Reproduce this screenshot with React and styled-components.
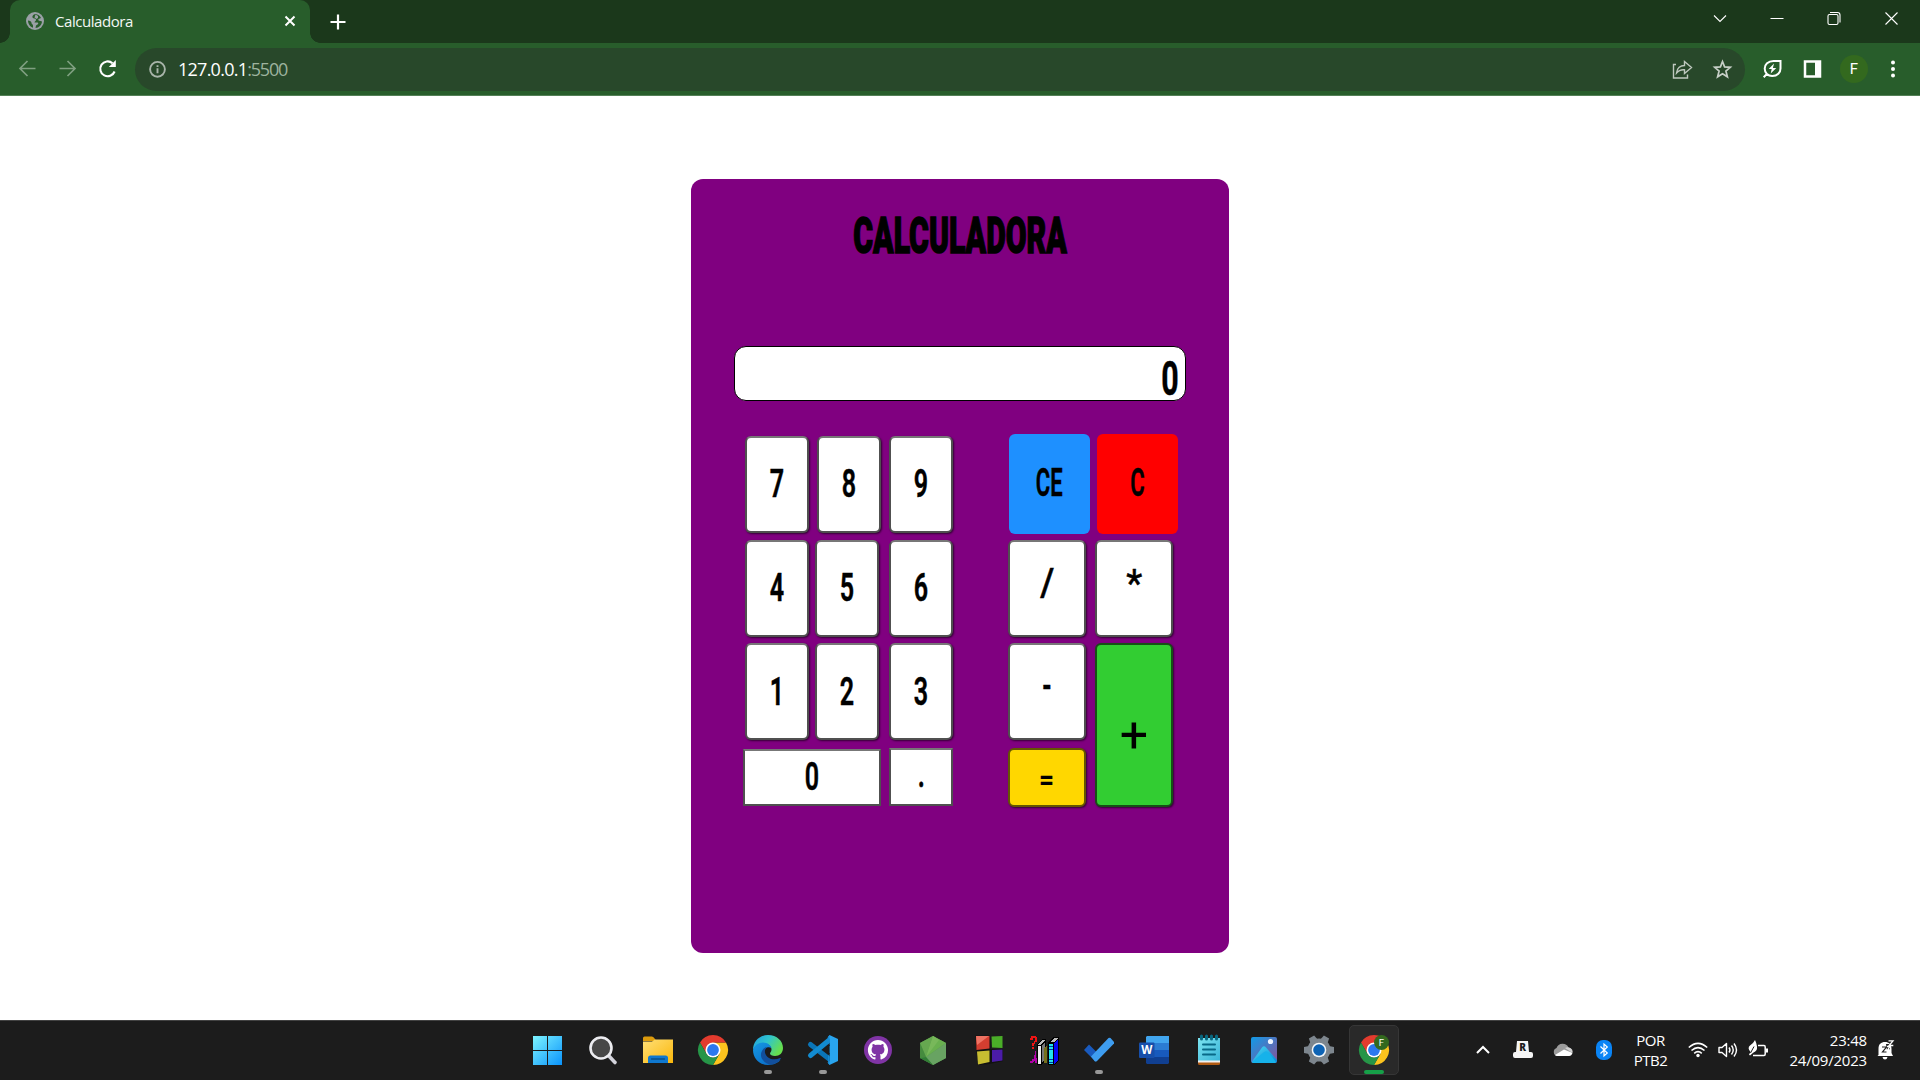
import React from "react";
import styled, { createGlobalStyle } from "styled-components";

const GlobalStyle = createGlobalStyle`
  * { box-sizing: border-box; }
  html, body { margin: 0; padding: 0; background: #fff; overflow: hidden; }
  svg { display: block; flex: none; overflow: visible; }
`;

const Screen = styled.div`
  width: 1920px;
  height: 1080px;
  display: flex;
  flex-direction: column;
  font-family: "Open Sans", "Noto Sans", sans-serif;
`;

/* ---------- browser window ---------- */
const TabStrip = styled.header`
  height: 43px;
  background: #1b381b;
  display: flex;
  align-items: flex-end;
  padding-left: 10px;
`;
const Tab = styled.div`
  position: relative;
  width: 300px;
  height: 43px;
  background: #285d2b;
  border-radius: 10px 10px 0 0;
  display: flex;
  align-items: center;
  padding: 0 14px 1px 16px;
  &::before, &::after {
    content: "";
    position: absolute;
    bottom: 0;
    width: 10px;
    height: 10px;
  }
  &::before { left: -10px; background: radial-gradient(circle at 0 0, transparent 9.5px, #285d2b 10px); }
  &::after { right: -10px; background: radial-gradient(circle at 100% 0, transparent 9.5px, #285d2b 10px); }
`;
const TabTitle = styled.span`
  flex: 1;
  margin-left: 11px;
  color: #f4f7f4;
  font-size: 15px;
  letter-spacing: -0.45px;
`;
const NewTab = styled.div`
  height: 43px;
  padding: 0 0 0 20px;
  display: flex;
  align-items: center;
  flex: 1;
`;
const WindowControls = styled.div`
  height: 43px;
  display: flex;
  padding: 12px 22px 0 0;
  gap: 44px;
`;
const Toolbar = styled.div`
  height: 53px;
  background: #285d2b;
  border-bottom: 1px solid #538056;
  display: flex;
  align-items: center;
  padding: 0 17px 0 17px;
`;
const NavButtons = styled.div`
  display: flex;
  flex: none;
  gap: 20px;
  width: 118px;
`;
const AddressBar = styled.div`
  width: 1610px;
  flex: none;
  height: 43px;
  border-radius: 22px;
  background: #28482a;
  display: flex;
  align-items: center;
  padding: 0 11px 0 12px;
`;
const Url = styled.span`
  flex: 1;
  margin-left: 11px;
  color: #fff;
  font-size: 18px;
  letter-spacing: -0.75px;
  span { color: #9db39e; letter-spacing: -1.2px; }
`;
const AddressActions = styled.div`
  display: flex;
  gap: 16px;
`;
const ToolbarActions = styled.div`
  display: flex;
  align-items: center;
  margin-left: 15px;
  gap: 16px;
`;
const Avatar = styled.div`
  width: 28px;
  height: 28px;
  border-radius: 50%;
  background: #33691e;
  color: #fff;
  font: 15px/28px Roboto, sans-serif;
  text-align: center;
`;

/* ---------- calculator ---------- */
const Page = styled.main`
  height: 924px;
  background: #fff;
  display: flex;
  justify-content: center;
  align-items: flex-start;
  padding: 83px 0 0;
`;
const Calculator = styled.section`
  width: 538px;
  height: 774px;
  border-radius: 12px;
  background: #800080;
  font-family: Roboto, "Liberation Sans", sans-serif;
  color: #000;
`;
const Title = styled.h1`
  margin: 31px 0 0;
  height: 52px;
  line-height: 52px;
  text-align: center;
  font-size: 49.500px;
  font-weight: 900;
  span {
    display: inline-block;
    transform: scaleX(0.61);
    -webkit-text-stroke: 1.500px #000;
  }
`;
const Display = styled.div`
  width: 452px;
  height: 55px;
  margin: 84px 0 0 43px;
  border: 1px solid #000;
  border-radius: 12px;
  background: #fff;
  display: flex;
  justify-content: flex-end;
  align-items: center;
  padding: 10px 1px 0 0;
`;
const Glyph = styled.span`
  display: block;
  line-height: 1;
  font-size: ${(p) => p.$size || 38}px;
  font-weight: ${(p) => p.$weight || 600};
  transform: translateY(${(p) => p.$dy || 0}px) scaleX(${(p) => p.$sx || 0.66});
  -webkit-text-stroke: ${(p) => p.$stroke ?? 0.5}px #000;
`;
const Keys = styled.div`
  display: flex;
  padding: 33px 0 0 54px;
`;
const NumberPad = styled.div`
  width: 263px;
  padding-top: 2px;
`;
const OperatorPad = styled.div`
  display: grid;
  grid-template-columns: 87px 82px;
  grid-template-rows: 106px 103px 105px 60px;
  justify-items: start;
  align-items: start;
`;
const KeyRow = styled.div`
  display: flex;
  align-items: flex-end;
  height: ${(p) => p.$h || 97}px;
  margin-bottom: ${(p) => p.$mb ?? 7}px;
  margin-left: ${(p) => p.$ml || 0}px;
`;
const Key = styled.button`
  width: ${(p) => p.$w || 64}px;
  height: ${(p) => p.$h || 97}px;
  margin: 0 0 0 ${(p) => p.$ml || 0}px;
  padding: 0;
  border: ${(p) => (p.$flat ? "0" : `2px solid ${p.$edge || "#505050"}`)};
  border-top-color: ${(p) => p.$edge || "#777"};
  border-radius: ${(p) => (p.$square ? 0 : 6)}px;
  background: ${(p) => p.$bg || "#fff"};
  box-shadow: ${(p) => (p.$flat || p.$square ? "none" : "1px 1px 2px rgba(0,0,0,.6)")};
  color: #000;
  font-family: inherit;
  display: flex;
  justify-content: center;
  align-items: center;
  grid-row: ${(p) => p.$row || "auto"};
`;

/* ---------- taskbar ---------- */
const Taskbar = styled.footer`
  height: 60px;
  background: #1c1c1c;
  border-top: 1px solid #424242;
  display: flex;
  padding: 0 0 1px 520px;
`;
const Apps = styled.div`
  width: 882px;
  flex: none;
  display: grid;
  grid-template-columns: repeat(16, 1fr);
`;
const AppSlot = styled.div`
  position: relative;
  display: flex;
  align-items: center;
  justify-content: center;
  &::after {
    content: "";
    position: absolute;
    bottom: 5px;
    left: calc(50% - ${(p) => (p.$active ? 10 : 4)}px);
    width: ${(p) => (p.$active ? 20 : 8)}px;
    height: 4px;
    border-radius: 2px;
    background: ${(p) => (p.$active ? "#16a048" : p.$open ? "#989898" : "transparent")};
  }
`;
const ActiveTile = styled.div`
  width: 50px;
  height: 50px;
  border: 1px solid #363636;
  border-radius: 5px;
  background: #292929;
  display: flex;
  align-items: center;
  justify-content: center;
`;
const Tray = styled.div`
  display: flex;
  align-items: center;
  margin-left: 61px;
  color: #fff;
`;
const Slot = styled.div`
  width: ${(p) => p.$w}px;
  margin-left: ${(p) => p.$ml || 0}px;
  display: flex;
  justify-content: center;
`;
const TrayText = styled.div`
  width: ${(p) => p.$w}px;
  text-align: ${(p) => p.$align || "center"};
  font-size: 15px;
  line-height: 20px;
  letter-spacing: ${(p) => p.$track ?? -0.5}px;
  padding-bottom: 1px;
`;

const Stroke = ({ w = 20, h = w, box, color = "#fff", sw = 2, children, ...rest }) => (
  <svg width={w} height={h} viewBox={box || `0 0 ${w} ${h}`} fill="none" stroke={color} strokeWidth={sw} {...rest}>
    {children}
  </svg>
);

const Globe = () => (
  <svg width="18" height="18" viewBox="0 0 18 18">
    <circle cx="9" cy="9" r="9" fill="#9aa0a6" />
    <path d="M9.500 2C7 2.500 6 4 6.500 5.500 7.500 7 9.500 6 10 7.500 10.300 9 8.500 9.200 8.500 10.500H11.500C12.500 10.500 12.500 12 11.500 12.500L10 13.500 9.500 16C13 15.800 15.800 13 16 9.500L14.500 9C12.500 9 12 8 12.500 7L15 6C14 3.700 12 2.200 9.500 2Z M2 8.500C2 12 4.200 14.700 7 15.700V13.500C7 12 5.500 12.500 5.500 11 5.500 9.500 4 8.800 2 8.500Z" fill="#285d2b" />
    <path d="M9.500 2.500 12 4V6L10.500 7 8.500 5.500Z" fill="#9aa0a6" />
  </svg>
);

const Chrome = ({ badge }) => (
  <svg width="30" height="30" viewBox="0 0 30 30">
    <path d="M15 7.500H28A15 15 0 0 1 15 30L21.500 18.700Z" fill="#fcc31e" />
    <path d="M2 7.500 8.500 18.700 15 15 15 7.500H28A15 15 0 0 0 2 7.500Z" fill="#e33b2e" />
    <path d="M2 7.500 8.500 18.700A7.500 7.500 0 0 0 21.500 18.700L15 30A15 15 0 0 1 2 7.500Z" fill="#269547" />
    <circle cx="15" cy="15" r="7.500" fill="#fff" />
    <circle cx="15" cy="15" r="5.900" fill="#2b78ee" />
    {badge && (
      <>
        <circle cx="22.500" cy="7.500" r="7.500" fill="#33691e" />
        <text x="22.500" y="10.700" textAnchor="middle" fontFamily="Roboto, sans-serif" fontSize="9.500" fill="#fff">F</text>
      </>
    )}
  </svg>
);

const Start = () => (
  <svg width="29" height="29" viewBox="0 0 29 29">
    <defs>
      <linearGradient id="start" gradientUnits="userSpaceOnUse" x1="0" y1="0" x2="29" y2="29">
        <stop stopColor="#7df4ff" /><stop offset="1" stopColor="#0a93fb" />
      </linearGradient>
    </defs>
    <path fill="url(#start)" d="M0 0H14V14H0ZM15 0H29V14H15ZM0 15H14V29H0ZM15 15H29V29H15Z" />
  </svg>
);
const Search = () => (
  <svg width="28" height="28" viewBox="0 0 28 28">
    <path d="M19 19 26 26.500" stroke="#d4d4dc" strokeWidth="3.600" strokeLinecap="round" />
    <circle cx="12" cy="12" r="10.500" fill="#474747" stroke="#ececf0" strokeWidth="2.600" />
  </svg>
);
const Folder = () => (
  <svg width="30" height="28" viewBox="0 0 30 28">
    <defs>
      <linearGradient id="folder" x1="0" y1="0" x2="1" y2="1"><stop stopColor="#ffdf76" /><stop offset="1" stopColor="#fab70b" /></linearGradient>
    </defs>
    <path d="M0 2Q0 .5 1.500 .5H9Q10.500 .5 12 3L13 5H0Z" fill="#dc9b0c" />
    <path d="M0 5.500H9L12 3.500H30V27H0Z" fill="url(#folder)" />
    <path d="M5 27V22Q5 19.500 7.500 19.500H22.500Q25 19.500 25 22V27Z" fill="#0f78cf" />
    <path d="M8.500 23H21.500" stroke="#0a4f88" strokeWidth="1.300" strokeLinecap="round" />
  </svg>
);
const Edge = () => (
  <svg width="30" height="30" viewBox="0 0 30 30">
    <defs>
      <linearGradient id="edgeTop" x1="0" y1="0" x2="1" y2=".5"><stop stopColor="#1e9de3" /><stop offset=".5" stopColor="#30c5cc" /><stop offset="1" stopColor="#66df4e" /></linearGradient>
      <linearGradient id="edgeSide" x1="0" y1="0" x2="1" y2="1"><stop stopColor="#1699e4" /><stop offset="1" stopColor="#0763c2" /></linearGradient>
    </defs>
    <path d="M0 15C0 6 7 0 15 0c9 0 15 6 15 13 0 5-3.500 8-8 8-3 0-5-1-5-2.500 0-1 1.500-1.500 1.500-4C18.500 11 15 9 11 9 6 9 1 12 0 15Z" fill="url(#edgeTop)" />
    <path d="M0 15C1 10.500 5.500 7.500 10 7.500c4.500 0 8 3 8.500 5.500-3-2-7.500-.5-7.500 5 0 5 4 9 9 9 3 0 5-.7 7.500-2.200C25 28 20.500 30 15 30 6.500 30 0 23.500 0 15Z" fill="url(#edgeSide)" />
    <path d="M12.500 12.300C8 15 6.500 20 9.500 24.500c3 4.500 8 6 12 4.300 3-1.200 5-3 6.300-5.300.2-.5-.3-.8-.8-.5-6.500 3.300-14 .3-15-5.500-.3-2 .2-4 2-5Z" fill="#124f9c" />
  </svg>
);
const VsCode = () => (
  <svg width="30" height="30" viewBox="0 0 30 30">
    <path d="M2.500 9.500 22.500 25" stroke="#0a75b8" strokeWidth="5" strokeLinecap="round" />
    <path d="M2.500 20.500 22.500 4" stroke="#128bd0" strokeWidth="5" strokeLinecap="round" />
    <path d="M21.500 0 30 4V26L21.500 30 19.500 27.500 22 26V4L19.500 2.500Z" fill="#29a5ef" />
    <path d="M21.500 .3V29.700L20 28V21L22 18V11L20 8V2Z" fill="#1689d0" />
  </svg>
);
const GitHub = () => (
  <svg width="28" height="28" viewBox="0 0 28 28">
    <circle cx="14" cy="14" r="14" fill="#8034a5" />
    <path transform="translate(3.900 3.900) scale(1.260)" fill="#fff" d="M8 0C3.580 0 0 3.580 0 8c0 3.540 2.290 6.530 5.470 7.590.4.070.55-.17.55-.38 0-.19-.01-.82-.01-1.490-2.010.37-2.530-.49-2.690-.94-.09-.23-.48-.94-.82-1.130-.28-.15-.68-.52-.01-.53.63-.01 1.080.58 1.230.82.72 1.210 1.870.87 2.330.66.07-.52.28-.87.51-1.070-1.780-.2-3.640-.89-3.640-3.950 0-.87.31-1.590.82-2.150-.08-.2-.36-1.020.08-2.120 0 0 .67-.21 2.200.82.64-.18 1.320-.27 2-.27s1.360.09 2 .27c1.530-1.040 2.200-.82 2.200-.82.44 1.100.16 1.920.08 2.120.51.56.82 1.270.82 2.150 0 3.070-1.870 3.750-3.650 3.950.29.25.54.73.54 1.480 0 1.070-.01 1.930-.01 2.200 0 .21.15.46.55.38A8.010 8.010 0 0 0 16 8c0-4.420-3.580-8-8-8Z" />
  </svg>
);
const Node = () => (
  <svg width="26" height="29" viewBox="0 0 26 29">
    <path d="M13 0 26 7V22L13 29 0 22V7Z" fill="#549b48" />
    <path d="M13 0 0 7 6 21Z" fill="#66a850" /><path d="M13 0 26 7 6 21Z" fill="#69b04f" />
    <path d="M13 0 19 4 6 21Z" fill="#78b85a" /><path d="M26 7V22L13 29 6 21Z" fill="#68a362" />
    <path d="M0 7 6 21 0 22Z" fill="#458b3e" /><path d="M0 22 6 21 13 29Z" fill="#317d36" />
  </svg>
);
const Blocks = () => (
  <svg width="28" height="30" viewBox="0 0 28 30">
    <path d="M.5 .5H15L15.500 14 28 14V26L14.500 29 3 30 1.500 15Z" fill="#111" />
    <path d="M1 1H14.500V13.500L1.500 15Z" fill="#d43e30" /><path d="M1 1H14L2 10Z" fill="#ee7363" />
    <path d="M16.500 1.500 27.500 1V13L17 12.500Z" fill="#4aad28" />
    <path d="M2 16.500 14.500 15.500V27L3 29.500Z" fill="#c7bd31" />
    <path d="M17 15 27.500 14.500V25.500L17 27Z" fill="#4b1ca8" />
  </svg>
);
const Books = () => (
  <svg width="30" height="30" viewBox="0 0 30 30" shapeRendering="crispEdges">
    <path d="M1 5V3H2V1H7V2H8V7H6V9H5V11H3V8H5V6H6V3H4V5Z" fill="#f01414" />
    <path d="M3 12H5V14H3Z" fill="#f01414" />
    <path d="M6 16H7V23H8V28H6V26L3 28H1V26H3V24H5Z" fill="#b000a8" />
    <path d="M8 10 13 4H17V25L12 30H8Z" fill="#000" />
    <path d="M9 11H12V29H9Z" fill="#eee" /><path d="M9 10 13 5H16L12 10Z" fill="#bbb" /><path d="M13 10 16 7V24L13 28Z" fill="#777" />
    <path d="M15 14 18 10V28H15Z" fill="#76701c" />
    <path d="M19 8 24 2H30V25L25 30H19Z" fill="#000" />
    <path d="M20 9H24V29H20Z" fill="#20e5ee" /><path d="M21 7 25 3H29L25 7Z" fill="#bbb" /><path d="M25 8 29 4V25L25 29Z" fill="#0707f4" />
    <path d="M20 11H24M20 14H24M20 24H24M20 27H24" stroke="#0038ae" />
  </svg>
);
const Todo = () => (
  <svg width="30" height="26" viewBox="0 0 30 26">
    <path d="M0 13 5 7.500 16 18.500 11.500 24.500Z" fill="#195abe" />
    <path d="M7 19.500 24.500 1Q25.500 .5 26.500 1L30 5V6.500L13 24Q11.500 25 10.500 24Z" fill="#3e9df0" />
  </svg>
);
const Word = () => (
  <svg width="30" height="28" viewBox="0 0 30 28">
    <path d="M8 0H30V7H7V1Z" fill="#41a5ee" /><path d="M7 7H30V14H7Z" fill="#2b7cd3" />
    <path d="M7 14H30V21H7Z" fill="#185abd" /><path d="M7 21H30V27L29 28H8L7 27Z" fill="#103f91" />
    <rect x="0" y="6.500" width="15.500" height="15.500" rx="1" fill="#174fab" />
    <text x="7.800" y="18.300" textAnchor="middle" fontFamily="Open Sans, sans-serif" fontWeight="700" fontSize="11.500" fill="#fff">W</text>
  </svg>
);
const Notepad = () => (
  <svg width="22" height="30" viewBox="0 0 22 30">
    <defs><linearGradient id="note" x1="0" y1="0" x2="1" y2="1"><stop stopColor="#7ce3f0" /><stop offset="1" stopColor="#39b5d8" /></linearGradient></defs>
    <path d="M0 26H22V28.500Q22 30 20.500 30H1.500Q0 30 0 28.500Z" fill="#b15b13" />
    <path d="M0 25H22V27.500H0Z" fill="#f0f0f0" />
    <path d="M0 3H22V25.500H0Z" fill="url(#note)" />
    <path d="M3.500 1V4M8.500 1V4M13.500 1V4M18.500 1V4" stroke="#086880" strokeWidth="3" strokeLinecap="round" />
    <path d="M5 9.500H17M5 14.500H17M5 19.500H17" stroke="#086987" strokeWidth="2" strokeLinecap="round" />
  </svg>
);
const Photos = () => (
  <svg width="26" height="26" viewBox="0 0 26 26">
    <defs>
      <linearGradient id="sky" x1="0" y1="0" x2="1" y2="1"><stop stopColor="#109be8" /><stop offset="1" stopColor="#895299" /></linearGradient>
      <linearGradient id="hill" x1="0" y1="0" x2="1" y2="1"><stop stopColor="#4cdcf5" /><stop offset="1" stopColor="#0685d5" /></linearGradient>
    </defs>
    <rect width="26" height="26" rx="2" fill="url(#sky)" />
    <path d="M1 24.500 11 10.500Q13 8 15 10.500L26 23Q26 26 24 26H2Z" fill="url(#hill)" />
    <path d="M1 25 13 15Q15 13.500 17 15L25 25 24 26H2Z" fill="#16b2ea" />
    <circle cx="19.500" cy="4.500" r="2.600" fill="#eef4ff" />
  </svg>
);
const Gear = () => (
  <svg width="30" height="30" viewBox="0 0 30 30">
    <g fill="#7d868e">
      <circle cx="15" cy="15" r="11.500" />
      {[30, 90, 150, 210, 270, 330].map((a) => (
        <path key={a} d="M11 5 12 0H18L19 5Z" transform={`rotate(${a} 15 15)`} />
      ))}
    </g>
    <circle cx="15" cy="15" r="7.300" fill="#f4f7fa" />
    <circle cx="15" cy="15" r="5.800" fill="#0d63b5" />
  </svg>
);

const apps = [
  { id: "start", icon: <Start /> },
  { id: "search", icon: <Search /> },
  { id: "folder", icon: <Folder /> },
  { id: "chrome", icon: <Chrome /> },
  { id: "edge", icon: <Edge />, open: true },
  { id: "code", icon: <VsCode />, open: true },
  { id: "github", icon: <GitHub /> },
  { id: "node", icon: <Node /> },
  { id: "blocks", icon: <Blocks /> },
  { id: "books", icon: <Books /> },
  { id: "todo", icon: <Todo />, open: true },
  { id: "word", icon: <Word /> },
  { id: "notepad", icon: <Notepad /> },
  { id: "photos", icon: <Photos /> },
  { id: "gear", icon: <Gear /> },
  { id: "profile", icon: <ActiveTile><Chrome badge /></ActiveTile>, active: true },
];

const Browser = () => (
  <>
    <TabStrip>
      <Tab>
        <Globe />
        <TabTitle>Calculadora</TabTitle>
        <Stroke w={12} sw={2}><path d="M1.500 1.500 10.500 10.500M10.500 1.500 1.500 10.500" /></Stroke>
      </Tab>
      <NewTab>
        <Stroke w={16} sw={2.2}><path d="M8 .5V15.500M.5 8H15.500" /></Stroke>
      </NewTab>
      <WindowControls>
        <Stroke w={13} sw={1.1}><path d="M0 3.500 6 9.500 12 3.500" /></Stroke>
        <Stroke w={13} sw={1}><path d="M-.5 6.500H12.500" /></Stroke>
        <Stroke w={13} sw={1.1}><rect x="0" y="2.500" width="10" height="10" rx="1.500" /><path d="M2 .5H9.500Q12 .5 12 3V10.500" /></Stroke>
        <Stroke w={13} sw={1.1}><path d="M.5 .5 12.500 12.500M12.500 .5 .5 12.500" /></Stroke>
      </WindowControls>
    </TabStrip>
    <Toolbar>
      <NavButtons>
        <Stroke color="#7f9f80" sw={1.7}><path d="M18.500 9.500H3.500M10.500 2 3 9.500 10.500 17" /></Stroke>
        <Stroke color="#7f9f80" sw={1.7}><path d="M2.500 9.500H17.500M10.500 2 18 9.500 10.500 17" /></Stroke>
        <Stroke sw={2.1}><path d="M17.600 12.500A7.400 7.400 0 1 1 15.500 4.200" /><path d="M18.800 1V8H11.800Z" fill="#fff" stroke="none" /></Stroke>
      </NavButtons>
      <AddressBar>
        <Stroke color="#a9b5ab" sw={1.9}><circle cx="10.500" cy="10.300" r="7.400" /><path d="M10.500 9.300V14.300M10.500 6.300V8.100" /></Stroke>
        <Url>127.0.0.1<span>:5500</span></Url>
        <AddressActions>
          <Stroke w={24} color="#bfc8bf" sw={1.4}><path d="M6 7.500H3.500V21H17.500V17.500" /><path d="M6.500 16C7 11 10.500 8.500 14.500 8.500V4.500L21.500 10.500 14.500 16.500V12.800C11 12.500 8.500 13.500 6.500 16Z" /></Stroke>
          <Stroke w={24} color="#c7cfc7" sw={1.7}><path d="M12.500 4.500 14.600 9.900 20.300 10.300 15.900 14 17.400 19.800 12.500 16.700 7.600 19.800 9.100 14 4.700 10.300 10.400 9.900Z" /></Stroke>
        </AddressActions>
      </AddressBar>
      <ToolbarActions>
        <Stroke w={24} sw={2}><path d="M20.500 4H13.500C8 4 4.700 7.500 4.700 11.500C4.700 16 8 19 12.200 19C17.500 19 20.500 15.500 20.500 11.500Z M6.800 17 3.700 20.300" /><path d="M14 6.500 8.700 12H11.700L10.700 16.500 16.300 11H12.900Z" fill="#fff" stroke="none" /></Stroke>
        <Stroke w={24} sw={2.5}><path d="M5 4.500H20V19.500H5Z" /><path d="M15 4H21V20H15Z" fill="#fff" stroke="none" /></Stroke>
        <Avatar>F</Avatar>
        <svg width="18" height="20" viewBox="0 0 18 20" fill="#fff"><circle cx="9" cy="3.500" r="2" /><circle cx="9" cy="10" r="2" /><circle cx="9" cy="16.500" r="2" /></svg>
      </ToolbarActions>
    </Toolbar>
  </>
);

export default function App() {
  return (
    <Screen>
      <GlobalStyle />
      <Browser />
      <Page>
        <Calculator>
          <Title><span>CALCULADORA</span></Title>
          <Display><Glyph $size={49} $sx={0.62} $weight={700}>0</Glyph></Display>
          <Keys>
            <NumberPad>
              <KeyRow>
                <Key><Glyph $dy={-1.5}>7</Glyph></Key>
                <Key $ml={8}><Glyph $dy={-1.5}>8</Glyph></Key>
                <Key $ml={8}><Glyph $dy={-1.5}>9</Glyph></Key>
              </KeyRow>
              <KeyRow $mb={6}>
                <Key><Glyph $dy={-1.5}>4</Glyph></Key>
                <Key $ml={6}><Glyph $dy={-1.5}>5</Glyph></Key>
                <Key $ml={10}><Glyph $dy={-1.5}>6</Glyph></Key>
              </KeyRow>
              <KeyRow $mb={8}>
                <Key><Glyph $dy={-0.5}>1</Glyph></Key>
                <Key $ml={6}><Glyph $dy={-0.5}>2</Glyph></Key>
                <Key $ml={10}><Glyph $dy={-0.5}>3</Glyph></Key>
              </KeyRow>
              <KeyRow $h={58} $ml={-2} $mb={0}>
                <Key $square $w={138} $h={57}><Glyph $dy={-1.5}>0</Glyph></Key>
                <Key $square $ml={8} $h={58}><Glyph $dy={-3}>.</Glyph></Key>
              </KeyRow>
            </NumberPad>
            <OperatorPad>
              <Key $flat $bg="#1e90ff" $w={81} $h={100} $ml={1}><Glyph $sx={0.58} $dy={-1}>CE</Glyph></Key>
              <Key $flat $bg="#f00" $w={81} $h={100} $ml={2}><Glyph $sx={0.58} $dy={-1}>C</Glyph></Key>
              <Key $w={78}><Glyph $sx={0.95} $weight={500} $dy={-6}>/</Glyph></Key>
              <Key $w={78}><Glyph $sx={0.98} $weight={400} $dy={-5}>*</Glyph></Key>
              <Key $w={78}><Glyph $dy={-6}>-</Glyph></Key>
              <Key $w={78} $h={164} $row="span 2" $bg="#32cd32" $edge="#174f17"><Glyph $size={50} $sx={1} $weight={400} $stroke={0} $dy={10}>+</Glyph></Key>
              <Key $w={78} $h={59} $bg="#ffd700" $edge="#655600"><Glyph $size={30} $sx={0.88} $weight={600} $stroke={0.2} $dy={1.5}>=</Glyph></Key>
            </OperatorPad>
          </Keys>
        </Calculator>
      </Page>
      <Taskbar>
        <Apps>
          {apps.map((a) => <AppSlot key={a.id} $open={a.open} $active={a.active}>{a.icon}</AppSlot>)}
        </Apps>
        <Tray>
          <Slot $w={40}><Stroke w={14} h={10} sw={2}><path d="M1 8 7 2 13 8" /></Stroke></Slot>
          <Slot $w={40}>
            <svg width="20" height="18" viewBox="0 0 20 18">
              <path d="M4 0H15L16 11H18Q20 11 20 13V15Q20 17 18 17H2Q0 17 0 15V13Q0 11 2 11H3Z" fill="#f5f5f5" />
              <text x="9.700" y="9.800" textAnchor="middle" fontFamily="Open Sans, sans-serif" fontSize="10" fontWeight="800" fill="#1c1c1c">R</text>
            </svg>
          </Slot>
          <Slot $w={40}>
            <svg width="20" height="14" viewBox="0 0 20 14">
              <path d="M4 13A4.200 4.200 0 0 1 3.500 5A6.500 6.500 0 0 1 15.500 4.500 4.500 4.500 0 0 1 16 13Z" fill="#9b9b9b" />
              <path d="M12 5A5 5 0 0 1 16 4.500 4.300 4.300 0 0 1 19.500 10Z" fill="#d2d2d2" />
              <path d="M2 12 11 6.500 19.500 10Q18.500 13 16 13H4Q2.800 13 2 12Z" fill="#fff" />
            </svg>
          </Slot>
          <Slot $w={41}>
            <svg width="16" height="20" viewBox="0 0 16 20">
              <rect width="16" height="20" rx="7" fill="#0a84f5" />
              <path d="M4.500 6.500 11.300 13 8 16V4L11.300 7 4.500 13.500" fill="none" stroke="#fff" strokeWidth="1.200" />
            </svg>
          </Slot>
          <TrayText $w={53}>POR<br />PTB2</TrayText>
          <Slot $w={30} $ml={6}>
            <Stroke w={20} h={16} sw={1.6}>
              <path d="M.8 5.500Q10-2.800 19.200 5.500M3.500 8.500Q10 2.800 16.500 8.500M6.200 11.300Q10 8 13.800 11.300" /><circle cx="10" cy="13.500" r="1.700" fill="#fff" stroke="none" />
            </Stroke>
          </Slot>
          <Slot $w={30}>
            <Stroke w={20} h={16} sw={1.4}>
              <path d="M1 5.500H4L8.500 1.500V14.500L4 10.500H1Z" strokeLinejoin="round" /><path d="M11 5.500Q13 8 11 10.500M13.500 3.500Q17 8 13.500 12.500M16 1.500Q21 8 16 14.500" />
            </Stroke>
          </Slot>
          <Slot $w={30}>
            <Stroke w={20} h={16} sw={1.5}>
              <path d="M10 3.500H16Q17.200 3.500 17.200 5V12Q17.200 13.500 16 13.500H5" /><path d="M18 6.500H20V10.500H18Z" fill="#fff" stroke="none" />
              <path d="M7-2Q8.500 1 9 4.500 9.500 9 5.500 10.500L2 13.500 1 12.500 2.500 10Q-1 6 2 3.500 5 2 7-2Z" fill="#fff" stroke="none" />
              <path d="M2.500 11 6 4.500" stroke="#1c1c1c" strokeWidth="1" />
            </Stroke>
          </Slot>
          <TrayText $w={94} $align="right" $track={-0.2}>23:48<br />24/09/2023</TrayText>
          <Slot $w={38}>
            <svg width="18" height="20" viewBox="0 0 18 20">
              <path d="M1.500 15V9C1.500 4 4 2 8 2S14.500 4 14.500 9V13L16 16H.5Z M5.500 17H10.500Q10 19.500 8 19.500T5.500 17Z" fill="#fff" />
              <path d="M5 7H9.500L5.500 12H9.500" fill="none" stroke="#1c1c1c" strokeWidth="1.200" />
              <path d="M9 4H13V10H10Z" fill="#1c1c1c" /><path d="M11.500 .8H16L12 5.500H16.300M10 6.500H13L10.500 10H13.500" fill="none" stroke="#fff" strokeWidth="1.300" />
            </svg>
          </Slot>
        </Tray>
      </Taskbar>
    </Screen>
  );
}
